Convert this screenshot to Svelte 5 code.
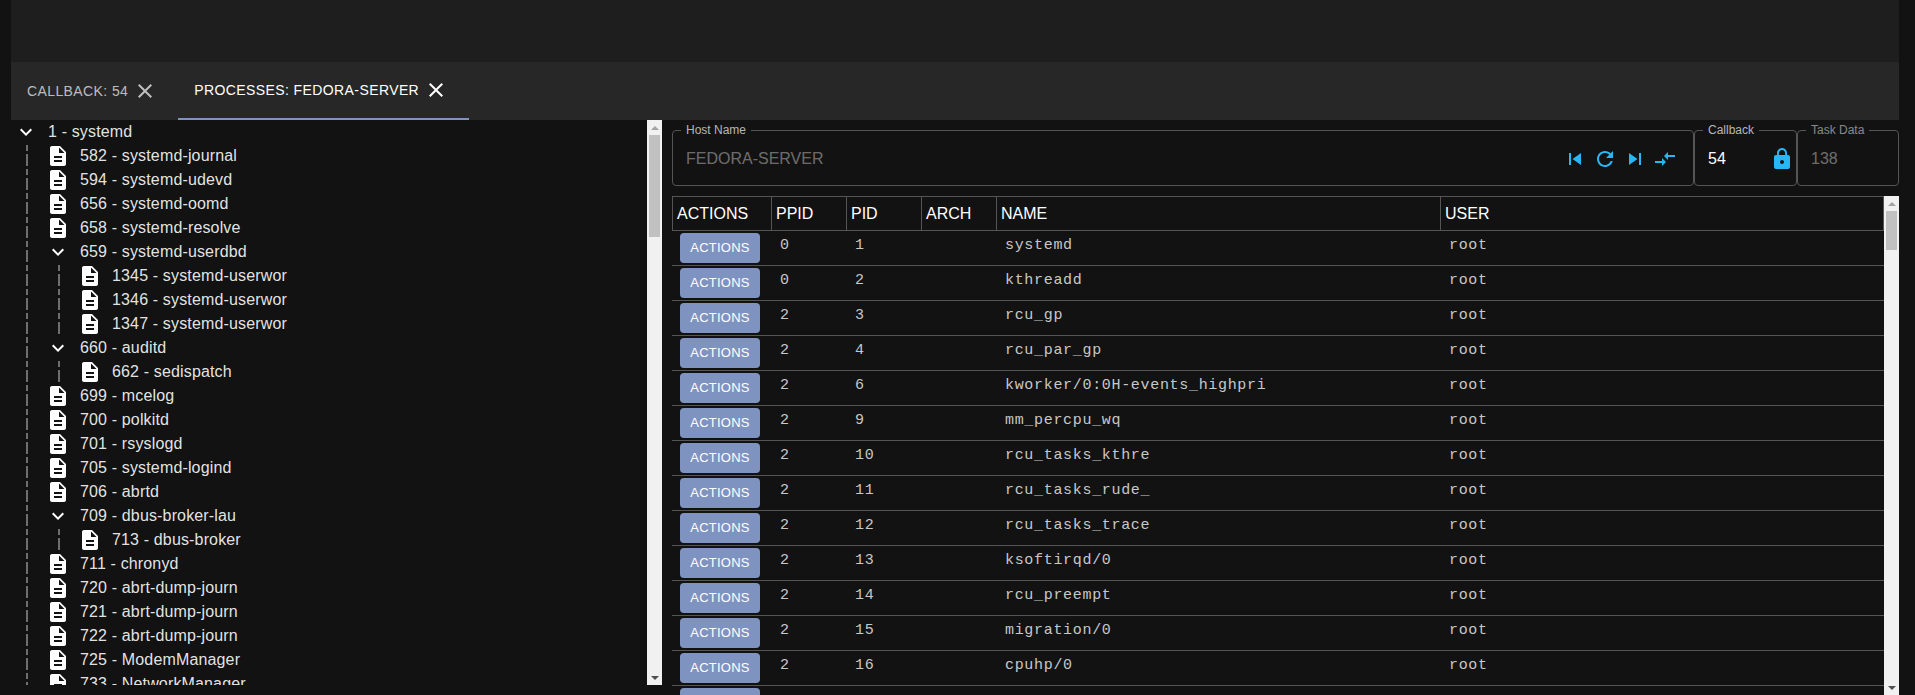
<script lang="ts">
  const FILE = 'M14 2H6c-1.1 0-1.99.9-1.99 2L4 20c0 1.1.89 2 1.99 2H18c1.1 0 2-.9 2-2V8l-6-6zm2 16H8v-2h8v2zm0-4H8v-2h8v2zm-3-5V3.5L18.5 9H13z';
  const CHEVRON = 'M16.59 8.59L12 13.17 7.41 8.59 6 10l6 6 6-6z';
  const CLOSE = 'M19 6.41L17.59 5 12 10.59 6.41 5 5 6.41 10.59 12 5 17.59 6.41 19 12 13.41 17.59 19 19 17.59 13.41 12z';

  const tree = [
    { label: '1 - systemd', children: [
      { label: '582 - systemd-journal' },
      { label: '594 - systemd-udevd' },
      { label: '656 - systemd-oomd' },
      { label: '658 - systemd-resolve' },
      { label: '659 - systemd-userdbd', children: [
        { label: '1345 - systemd-userwor' },
        { label: '1346 - systemd-userwor' },
        { label: '1347 - systemd-userwor' },
      ] },
      { label: '660 - auditd', children: [{ label: '662 - sedispatch' }] },
      { label: '699 - mcelog' },
      { label: '700 - polkitd' },
      { label: '701 - rsyslogd' },
      { label: '705 - systemd-logind' },
      { label: '706 - abrtd' },
      { label: '709 - dbus-broker-lau', children: [{ label: '713 - dbus-broker' }] },
      { label: '711 - chronyd' },
      { label: '720 - abrt-dump-journ' },
      { label: '721 - abrt-dump-journ' },
      { label: '722 - abrt-dump-journ' },
      { label: '725 - ModemManager' },
      { label: '733 - NetworkManager' },
    ] },
  ];

  const rows = [
    [0, 1, 'systemd'],
    [0, 2, 'kthreadd'],
    [2, 3, 'rcu_gp'],
    [2, 4, 'rcu_par_gp'],
    [2, 6, 'kworker/0:0H-events_highpri'],
    [2, 9, 'mm_percpu_wq'],
    [2, 10, 'rcu_tasks_kthre'],
    [2, 11, 'rcu_tasks_rude_'],
    [2, 12, 'rcu_tasks_trace'],
    [2, 13, 'ksoftirqd/0'],
    [2, 14, 'rcu_preempt'],
    [2, 15, 'migration/0'],
    [2, 16, 'cpuhp/0'],
  ];
</script>

{#snippet icon(d: string, cls: string)}
  <svg class={cls} viewBox="0 0 24 24" aria-hidden="true"><path {d} /></svg>
{/snippet}

{#snippet branch(nodes: any[])}
  {#each nodes as node}
    <div class="node">
      <div class="node-row">
        {@render icon(node.children ? CHEVRON : FILE, node.children ? 'chevron' : 'file')}
        <span>{node.label}</span>
      </div>
      {#if node.children}
        <div class="group">{@render branch(node.children)}</div>
      {/if}
    </div>
  {/each}
{/snippet}

{#snippet scrollbar(cls: string)}
  <div class="scrollbar {cls}">
    <i class="arrow up"></i>
    <div class="track"><div class="thumb"></div></div>
    <i class="arrow down"></i>
  </div>
{/snippet}

<div class="page">
  <div class="topbar"></div>
  <div class="tabs">
    <div class="tab">
      <span>CALLBACK: 54</span>
      {@render icon(CLOSE, 'close')}
    </div>
    <div class="tab active">
      <span>PROCESSES: FEDORA-SERVER</span>
      {@render icon(CLOSE, 'close')}
    </div>
  </div>
  <div class="content">
    <div class="left">
      <div class="tree">{@render branch(tree)}</div>
      {@render scrollbar('tree-bar')}
    </div>
    <div class="right">
      <div class="fields">
        <fieldset class="field host">
          <legend>Host Name</legend>
          <span class="value muted">FEDORA-SERVER</span>
          <div class="tools">
            <svg viewBox="0 0 24 24"><path d="M6 6h2v12H6zm3.5 6l8.5 6V6z" /></svg>
            <svg viewBox="0 0 24 24"><path d="M17.65 6.35C16.2 4.9 14.21 4 12 4c-4.42 0-7.99 3.58-7.99 8s3.57 8 7.99 8c3.73 0 6.84-2.55 7.73-6h-2.08c-.82 2.33-3.04 4-5.65 4-3.31 0-6-2.69-6-6s2.69-6 6-6c1.66 0 3.14.69 4.22 1.78L13 11h7V4l-2.35 2.35z" /></svg>
            <svg viewBox="0 0 24 24"><path d="M6 18l8.5-6L6 6v12zM16 6v12h2V6h-2z" /></svg>
            <svg viewBox="0 0 24 24"><path d="M9.01 14H2v2h7.01v3L13 15l-3.99-4v3zm5.98-1v-3H22V8h-7.01V5L11 9l3.99 4z" /></svg>
          </div>
        </fieldset>
        <fieldset class="field cb">
          <legend>Callback</legend>
          <span class="value">54</span>
          <svg class="lock" viewBox="0 0 24 24"><path d="M18 8h-1V6c0-2.76-2.24-5-5-5S7 3.24 7 6v2H6c-1.1 0-2 .9-2 2v10c0 1.1.9 2 2 2h12c1.1 0 2-.9 2-2V10c0-1.1-.9-2-2-2zm-6 9c-1.1 0-2-.9-2-2s.9-2 2-2 2 .9 2 2-.9 2-2 2zm3.1-9H8.9V6c0-1.71 1.39-3.1 3.1-3.1 1.71 0 3.1 1.39 3.1 3.1v2z" /></svg>
        </fieldset>
        <fieldset class="field task">
          <legend>Task Data</legend>
          <span class="value muted">138</span>
        </fieldset>
      </div>
      <div class="table-wrap">
        <div class="table">
          <div class="head">
            <div class="th">ACTIONS</div>
            <div class="th">PPID</div>
            <div class="th">PID</div>
            <div class="th">ARCH</div>
            <div class="th">NAME</div>
            <div class="th">USER</div>
          </div>
          {#each rows as [ppid, pid, name]}
            <div class="row">
              <div class="cell"><button>ACTIONS</button></div>
              <div class="cell mono">{ppid}</div>
              <div class="cell mono">{pid}</div>
              <div class="cell mono"></div>
              <div class="cell mono">{name}</div>
              <div class="cell mono">root</div>
            </div>
          {/each}
          <div class="row">
            <div class="cell"><button>ACTIONS</button></div>
          </div>
        </div>
        {@render scrollbar('table-bar')}
      </div>
    </div>
  </div>
</div>

<style>
  :global(body) {
    margin: 0;
    background: #121212;
    overflow: hidden;
  }

  .page {
    height: 695px;
    padding: 0 16px 0 11px;
    box-sizing: border-box;
    display: flex;
    flex-direction: column;
    overflow: hidden;
    color: #fff;
    font-family: "Liberation Sans", Arial, sans-serif;
  }

  .topbar {
    height: 62px;
    flex: none;
    background: #1e1e1e;
  }

  .tabs {
    height: 58px;
    flex: none;
    display: flex;
    background: #272727;
  }

  .tab {
    box-sizing: border-box;
    height: 58px;
    padding: 0 16px;
    display: flex;
    align-items: center;
    gap: 5px;
    font-size: 14px;
    letter-spacing: 0.4px;
    color: rgba(255, 255, 255, 0.7);
  }

  .tab.active {
    margin-left: 5px;
    width: 291px;
    color: #fff;
    border-bottom: 2px solid #7f93c0;
  }

  .close {
    width: 24px;
    height: 24px;
    fill: currentColor;
  }

  .content {
    flex: 1;
    min-height: 0;
    display: flex;
  }

  .left {
    width: 651px;
    height: 565px;
    flex: none;
    display: flex;
  }

  .tree {
    flex: 1;
    overflow: hidden;
    font-size: 16px;
    line-height: 24px;
    letter-spacing: 0.15px;
    color: rgba(255, 255, 255, 0.9);
  }

  .node-row {
    height: 24px;
    display: flex;
    align-items: center;
    gap: 10px;
    padding-left: 3px;
  }

  .node-row svg {
    width: 24px;
    height: 24px;
    flex: none;
    fill: #fff;
  }

  /* the guide line is uneven in the original, 6 and 12px dashes per row */
  .group {
    margin-left: 15px;
    padding-left: 17px;
    background: linear-gradient(
      to bottom,
      #6e6e6e 0 6px,
      transparent 6px 9px,
      #6e6e6e 9px 21px,
      transparent 21px 24px
    ) 0 1px / 2px 24px repeat-y;
  }

  .scrollbar {
    width: 15px;
    flex: none;
    display: flex;
    flex-direction: column;
    background: #f1f1f1;
  }

  .track {
    flex: 1;
    padding: 0 2px;
  }

  .thumb {
    background: #c1c1c1;
  }

  .tree-bar .thumb {
    height: 102px;
  }

  .table-bar .thumb {
    height: 39px;
  }

  .arrow {
    height: 15px;
    flex: none;
    display: flex;
    align-items: center;
    justify-content: center;
  }

  .arrow::before {
    content: '';
    border-left: 4px solid transparent;
    border-right: 4px solid transparent;
  }

  .arrow.up::before {
    border-bottom: 4px solid #a3a3a3;
  }

  .arrow.down::before {
    border-top: 4px solid #505050;
  }

  .right {
    flex: 1;
    min-width: 0;
    padding: 4px 0 0 10px;
    display: flex;
    flex-direction: column;
  }

  .fields {
    display: flex;
    height: 72px;
    flex: none;
  }

  .field {
    box-sizing: border-box;
    margin: 0;
    padding: 0 12px 4px 13px;
    height: 62px;
    display: flex;
    align-items: center;
    border: 1px solid #555;
    border-radius: 4px;
    min-width: 0;
  }

  .field legend {
    font-size: 12px;
    line-height: 12px;
    padding: 0 5px;
    margin-left: -5px;
    color: rgba(255, 255, 255, 0.7);
    height: 12px;
  }

  .host {
    flex: 1;
  }

  .cb {
    width: 103px;
    flex: none;
    padding-right: 2px;
  }

  .task {
    width: 102px;
    flex: none;
  }

  .task legend {
    color: rgba(255, 255, 255, 0.5);
  }

  .value {
    font-size: 16px;
    flex: 1;
  }

  .muted {
    color: rgba(255, 255, 255, 0.4);
  }

  .tools {
    display: flex;
    gap: 6px;
    margin-right: 4px;
  }

  .tools svg {
    width: 24px;
    height: 24px;
    fill: #29b6f6;
  }

  .lock {
    width: 24px;
    height: 24px;
    fill: #29b6f6;
  }

  .table-wrap {
    flex: 1;
    min-height: 0;
    display: flex;
    overflow: hidden;
  }

  .table {
    flex: 1;
    min-width: 0;
  }

  .head,
  .row {
    display: grid;
    grid-template-columns: 100px 75px 75px 75px 444px 1fr;
  }

  .head {
    grid-template-columns: 99px 75px 75px 75px 444px 1fr;
    height: 35px;
    box-sizing: border-box;
    border: 1px solid #555;
  }

  .th {
    padding-left: 4px;
    font-size: 16px;
    line-height: 33px;
    border-right: 1px solid #555;
  }

  .th:last-child {
    border-right: 0;
  }

  .row {
    height: 35px;
    box-sizing: border-box;
    border-bottom: 1px solid #555;
  }

  .cell {
    padding-left: 8px;
    min-width: 0;
  }

  .mono {
    font-family: "Liberation Mono", monospace;
    font-size: 15px;
    line-height: 30px;
    letter-spacing: 0.68px;
    color: #c8c8c8;
  }

  button {
    display: block;
    box-sizing: border-box;
    width: 80px;
    height: 30px;
    margin-top: 2px;
    padding: 0 0 2px;
    border: 0;
    border-radius: 4px;
    background: #7f93c0;
    color: #fff;
    font-family: inherit;
    font-size: 13px;
    letter-spacing: 0.25px;
  }
</style>
